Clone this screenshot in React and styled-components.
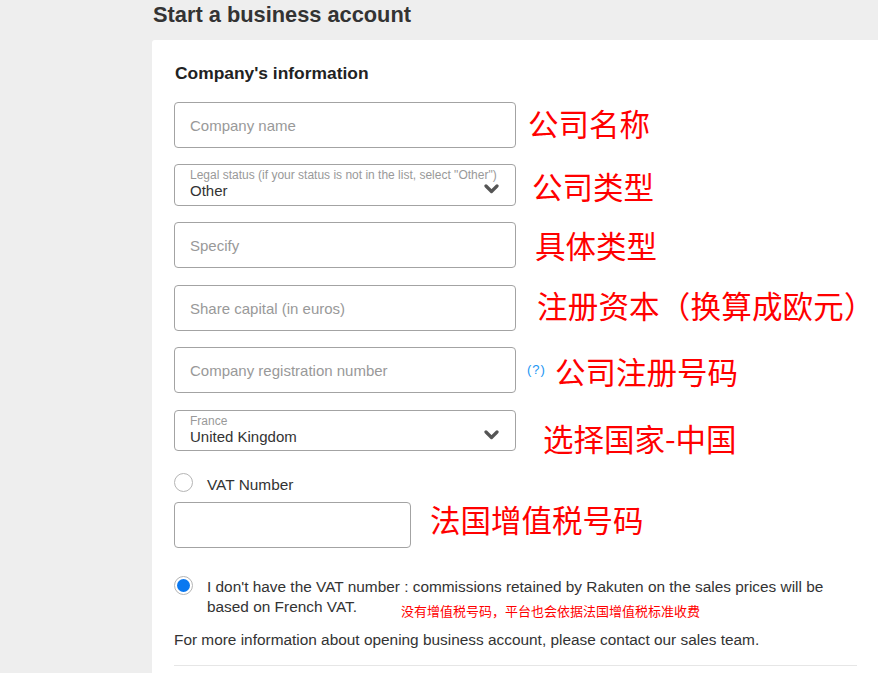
import React from "react";
import styled, { createGlobalStyle } from "styled-components";

const Global = createGlobalStyle`
  html, body { margin: 0; padding: 0; background: #eeeeee; }
  body { font-family: "Liberation Sans", Arial, sans-serif; color: #333; }
  * { box-sizing: border-box; }
`;

const Page = styled.div`
  padding-left: 152px;
  width: 878px;
  height: 673px;
  overflow: hidden;
`;

const Title = styled.h1`
  margin: 0;
  padding: 2px 0 0 1px;
  height: 40px;
  font-size: 21.8px;
  font-weight: bold;
  line-height: 26px;
  color: #333;
`;

const Card = styled.div`
  background: #fff;
  width: 726px;
  border-radius: 3px 0 0 0;
  padding: 23px 21px 20px 22px;
`;

const Heading = styled.h2`
  margin: 0 0 19px 1px;
  font-size: 17.4px;
  font-weight: bold;
  line-height: 20px;
  color: #222;
`;

const Row = styled.div`
  display: flex;
  align-items: center;
  margin-bottom: ${(p) => p.$mb ?? 16}px;
`;

const Field = styled.div`
  position: relative;
  width: ${(p) => p.$w ?? 342}px;
  height: ${(p) => p.$h ?? 46}px;
  flex: none;
  border: 1px solid #a3a3a3;
  border-radius: 4px;
  background: #fff;
  padding: 0 15px;
  display: flex;
  flex-direction: column;
  justify-content: center;
`;

const Placeholder = styled.span`
  font-size: 15px;
  color: #999;
  line-height: 18px;
  padding-top: 2px;
`;

const SelectLabel = styled.span`
  font-size: 12px;
  color: #999;
  line-height: 13px;
  margin-top: -2px;
`;

const SelectValue = styled.span`
  font-size: 15px;
  color: #333;
  line-height: 17px;
`;

const Chevron = styled.svg`
  position: absolute;
  right: 16px;
  top: 50%;
  margin-top: -1px;
  width: 15px;
  height: 10px;
`;

const Note = styled.span`
  flex: none;
  font-family: "Noto Sans CJK SC", "Microsoft YaHei", sans-serif;
  font-size: 30.5px;
  line-height: 1;
  color: #ff0000;
  white-space: nowrap;
  margin-left: ${(p) => p.$ml}px;
  letter-spacing: ${(p) => p.$ls ?? 0}px;
  transform: translateY(${(p) => p.$dy ?? 0}px);
`;

const Help = styled.span`
  font-size: 13px;
  color: #2196f3;
  margin-left: 11px;
  letter-spacing: 1px;
  transform: translateY(-1px);
`;

const RadioRow = styled.div`
  display: flex;
  align-items: flex-start;
  gap: 14px;
  margin-bottom: ${(p) => p.$mb ?? 0}px;
`;

const Radio = styled.span`
  flex: none;
  width: 19px;
  height: 19px;
  border-radius: 50%;
  border: 1px solid #b5b5b5;
  background: #fff;
  display: flex;
  align-items: center;
  justify-content: center;
  margin-top: ${(p) => p.$mt ?? 0}px;
  &::after {
    content: "";
    display: ${(p) => (p.$checked ? "block" : "none")};
    width: 13px;
    height: 13px;
    border-radius: 50%;
    background: #0a78f0;
  }
`;

const RadioText = styled.span`
  font-size: 15.4px;
  line-height: 20px;
  color: #333;
  padding-top: ${(p) => p.$pt ?? 0}px;
`;

const SmallNote = styled.span`
  font-family: "Noto Sans CJK SC", "Microsoft YaHei", sans-serif;
  font-size: 13px;
  color: #ff0000;
  margin-left: 44px;
  vertical-align: -4px;
  line-height: 1;
`;

const Info = styled.p`
  margin: 13px 0 0 0;
  font-size: 15.4px;
  line-height: 20px;
  color: #333;
`;

const Divider = styled.hr`
  border: none;
  border-top: 1px solid #e6e6e6;
  margin: 15px 0 0 0;
  width: 683px;
`;

const Caret = () => (
  <Chevron viewBox="0 0 15 10">
    <polyline points="2,2 7.5,7.5 13,2" fill="none" stroke="#555" strokeWidth="3.2" strokeLinecap="round" strokeLinejoin="round" />
  </Chevron>
);

export default function App() {
  return (
    <Page>
      <Global />
      <Title>Start a business account</Title>
      <Card>
        <Heading>Company's information</Heading>

        <Row>
          <Field><Placeholder>Company name</Placeholder></Field>
          <Note $ml={12} $dy={-2}>公司名称</Note>
        </Row>

        <Row>
          <Field $h={42}>
            <SelectLabel>Legal status (if your status is not in the list, select "Other")</SelectLabel>
            <SelectValue>Other</SelectValue>
            <Caret />
          </Field>
          <Note $ml={16} $dy={1}>公司类型</Note>
        </Row>

        <Row $mb={17}>
          <Field><Placeholder>Specify</Placeholder></Field>
          <Note $ml={19} $dy={0}>具体类型</Note>
        </Row>

        <Row>
          <Field><Placeholder>Share capital (in euros)</Placeholder></Field>
          <Note $ml={21} $dy={-3} $ls={0.2}>注册资本（换算成欧元）</Note>
        </Row>

        <Row $mb={17}>
          <Field><Placeholder>Company registration number</Placeholder></Field>
          <Help>(?)</Help>
          <Note $ml={9} $dy={1}>公司注册号码</Note>
        </Row>

        <Row $mb={22}>
          <Field $h={41}>
            <SelectLabel>France</SelectLabel>
            <SelectValue>United Kingdom</SelectValue>
            <Caret />
          </Field>
          <Note $ml={27} $dy={8}>选择国家-中国</Note>
        </Row>

        <RadioRow $mb={7}>
          <Radio />
          <RadioText $pt={2}>VAT Number</RadioText>
        </RadioRow>

        <Row $mb={28}>
          <Field $w={237}></Field>
          <Note $ml={19} $dy={-6}>法国增值税号码</Note>
        </Row>

        <RadioRow>
          <Radio $checked $mt={0} />
          <RadioText $pt={1}>
            I don't have the VAT number : commissions retained by Rakuten on the sales prices will be
            <br />
            based on French VAT.
            <SmallNote>没有增值税号码，平台也会依据法国增值税标准收费</SmallNote>
          </RadioText>
        </RadioRow>

        <Info>For more information about opening business account, please contact our sales team.</Info>
        <Divider />
      </Card>
    </Page>
  );
}
